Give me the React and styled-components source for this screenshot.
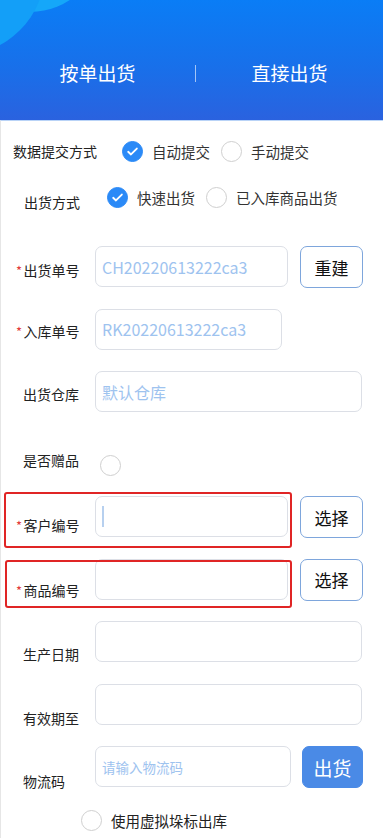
import React from 'react';
import styled, { createGlobalStyle } from 'styled-components';

const GlobalStyle = createGlobalStyle`
  html, body {
    margin: 0;
    padding: 0;
    background: #fff;
  }
  body {
    font-family: "Noto Sans CJK SC", "Noto Sans", sans-serif;
    color: #222;
  }
  * {
    box-sizing: border-box;
  }
`;

const Page = styled.div`
  width: 383px;
  min-height: 838px;
  overflow: hidden;
`;

const Header = styled.div`
  position: relative;
  height: 120px;
  overflow: hidden;
  background: linear-gradient(180deg, #0a7df6 0%, #1870ea 55%, #2a62df 100%);
  display: grid;
  grid-template-columns: 195px 1px 1fr;
  align-items: center;
  /* two pale bubbles in the top-left corner */
  &::before {
    content: '';
    position: absolute;
    left: -42px;
    top: -132px;
    width: 144px;
    height: 144px;
    border-radius: 50%;
    background: #15a7f9;
  }
  &::after {
    content: '';
    position: absolute;
    left: -125px;
    top: -115px;
    width: 170px;
    height: 170px;
    border-radius: 50%;
    background: #139ff8;
  }
`;

const Tab = styled.div`
  position: relative;
  z-index: 1;
  text-align: center;
  color: #fff;
  font-size: 19px;
  padding-top: 24px;
`;

const Divider = styled.div`
  position: relative;
  z-index: 1;
  width: 1px;
  height: 17px;
  margin-top: 26px;
  background: rgba(255, 255, 255, 0.6);
`;

const Form = styled.div`
  border-left: 1px solid #e6e6e6;
  border-top: 1px solid #b9d3f7;
  padding: 20px 21px 40px 0;
`;

const ChoiceRow = styled.div`
  display: flex;
  align-items: flex-start;
  padding-left: ${p => p.indent}px;
  margin-top: ${p => p.top || 0}px;
  height: ${p => p.h || 21}px;
`;

const ChoiceLabel = styled.div`
  font-size: 14px;
  line-height: 20px;
  color: #222;
  padding-top: ${p => p.drop || 0}px;
  margin-right: ${p => p.space}px;
  white-space: nowrap;
`;

const Option = styled.div`
  display: flex;
  align-items: center;
  margin-right: 11px;
  font-size: 14.5px;
  line-height: 21px;
  color: #333;
  white-space: nowrap;
`;

const Circle = styled.span`
  display: inline-flex;
  align-items: center;
  justify-content: center;
  flex: none;
  width: 21px;
  height: 21px;
  border-radius: 50%;
  margin-right: 9px;
  margin-left: ${p => p.ml || 0}px;
  margin-top: ${p => p.mt || 0}px;
  background: ${p => (p.checked ? '#2b8af7' : '#fff')};
  border: 1px solid ${p => (p.checked ? '#2b8af7' : '#cfcfcf')};
`;

const Fields = styled.div`
  display: flex;
  flex-direction: column;
  gap: 21.5px;
  margin-top: 37px;
`;

const FieldRow = styled.div`
  position: relative;
  display: flex;
  align-items: flex-start;
  height: 41px;
`;

const Label = styled.div`
  width: 94px;
  flex: none;
  font-size: 14px;
  line-height: 20px;
  color: #222;
  padding-left: ${p => (p.required ? 15 : 22)}px;
  padding-top: ${p => p.drop}px;
  white-space: nowrap;
`;

const Star = styled.span`
  display: inline-block;
  width: 7.5px;
  color: #e23b3b;
  font-size: 13px;
`;

const InputWrap = styled.div`
  position: relative;
  width: ${p => (p.w ? `${p.w}px` : 'auto')};
  flex: ${p => (p.w ? 'none' : '1')};
`;

const TextInput = styled.input`
  display: block;
  width: 100%;
  height: 41px;
  border: 1px solid #dcdfe6;
  border-radius: 7px;
  padding: 0 6px;
  font-family: "Noto Sans CJK SC", "Noto Sans", sans-serif;
  font-size: ${p => p.fs || 16}px;
  color: #9ec3ef;
  background: #fff;
  outline: none;
  &::placeholder {
    color: #9ec3ef;
  }
`;

const Caret = styled.span`
  position: absolute;
  left: 7px;
  top: 10px;
  width: 2px;
  height: 21px;
  background: #b7d0ef;
`;

const Button = styled.button`
  flex: none;
  width: ${p => p.w || 63}px;
  height: 42px;
  margin-left: ${p => p.ml || 12}px;
  border-radius: 7px;
  border: 1px solid ${p => (p.primary ? '#4a8ae6' : '#7ea6dc')};
  background: ${p => (p.primary ? '#4a8ae6' : '#fff')};
  color: ${p => (p.primary ? '#fff' : '#111')};
  font-family: "Noto Sans CJK SC", "Noto Sans", sans-serif;
  font-size: ${p => (p.primary ? 19 : 17)}px;
  padding: 0;
  cursor: pointer;
`;

const Mark = styled.div`
  position: absolute;
  left: ${p => p.x}px;
  top: ${p => p.y}px;
  width: ${p => p.w}px;
  height: ${p => p.h}px;
  border: 2px solid #e02525;
  border-radius: 3px;
  pointer-events: none;
`;

const FooterRow = styled.div`
  display: flex;
  align-items: center;
  padding-left: 80px;
  margin-top: 23px;
  font-size: 14.5px;
  line-height: 20px;
  color: #222;
`;

const Check = () => (
  <svg width="13" height="13" viewBox="0 0 24 24" fill="none">
    <path d="M4 12.5l5.2 5L20 6.5" stroke="#fff" strokeWidth="3.4" strokeLinecap="round" strokeLinejoin="round" />
  </svg>
);

const Radio = ({ checked, children }) => (
  <Option>
    <Circle checked={checked}>{checked && <Check />}</Circle>
    {children}
  </Option>
);

const ReqLabel = ({ required, drop, children }) => (
  <Label required={required} drop={drop}>
    {required && <Star>*</Star>}
    {children}
  </Label>
);

export default function App() {
  return (
    <Page>
      <GlobalStyle />
      <Header>
        <Tab>按单出货</Tab>
        <Divider />
        <Tab>直接出货</Tab>
      </Header>
      <Form>
        <ChoiceRow indent={12}>
          <ChoiceLabel space={25}>数据提交方式</ChoiceLabel>
          <Radio checked>自动提交</Radio>
          <Radio>手动提交</Radio>
        </ChoiceRow>
        <ChoiceRow indent={23} top={25} h={22}>
          <ChoiceLabel space={27} drop={5}>出货方式</ChoiceLabel>
          <Radio checked>快速出货</Radio>
          <Radio>已入库商品出货</Radio>
        </ChoiceRow>

        <Fields>
          <FieldRow>
            <ReqLabel required drop={14}>出货单号</ReqLabel>
            <InputWrap w={193}>
              <TextInput readOnly value="CH20220613222ca3" />
            </InputWrap>
            <Button>重建</Button>
          </FieldRow>
          <FieldRow>
            <ReqLabel required drop={12}>入库单号</ReqLabel>
            <InputWrap w={187}>
              <TextInput readOnly value="RK20220613222ca3" />
            </InputWrap>
          </FieldRow>
          <FieldRow>
            <ReqLabel drop={13}>出货仓库</ReqLabel>
            <InputWrap>
              <TextInput placeholder="默认仓库" />
            </InputWrap>
          </FieldRow>
          <FieldRow>
            <ReqLabel drop={16}>是否赠品</ReqLabel>
            <Circle ml={5} mt={21}></Circle>
          </FieldRow>
          <FieldRow>
            <ReqLabel required drop={19}>客户编号</ReqLabel>
            <InputWrap w={193}>
              <TextInput />
              <Caret />
            </InputWrap>
            <Button>选择</Button>
            <Mark x={3} y={-4} w={288} h={56} />
          </FieldRow>
          <FieldRow>
            <ReqLabel required drop={21}>商品编号</ReqLabel>
            <InputWrap w={193}>
              <TextInput />
            </InputWrap>
            <Button>选择</Button>
            <Mark x={4} y={1} w={287} h={48} />
          </FieldRow>
          <FieldRow>
            <ReqLabel drop={23}>生产日期</ReqLabel>
            <InputWrap>
              <TextInput />
            </InputWrap>
          </FieldRow>
          <FieldRow>
            <ReqLabel drop={24}>有效期至</ReqLabel>
            <InputWrap>
              <TextInput />
            </InputWrap>
          </FieldRow>
          <FieldRow>
            <ReqLabel drop={25}>物流码</ReqLabel>
            <InputWrap w={196}>
              <TextInput fs={13.5} placeholder="请输入物流码" />
            </InputWrap>
            <Button primary w={61} ml={11}>出货</Button>
          </FieldRow>
        </Fields>

        <FooterRow>
          <Circle />
          使用虚拟垛标出库
        </FooterRow>
      </Form>
    </Page>
  );
}
